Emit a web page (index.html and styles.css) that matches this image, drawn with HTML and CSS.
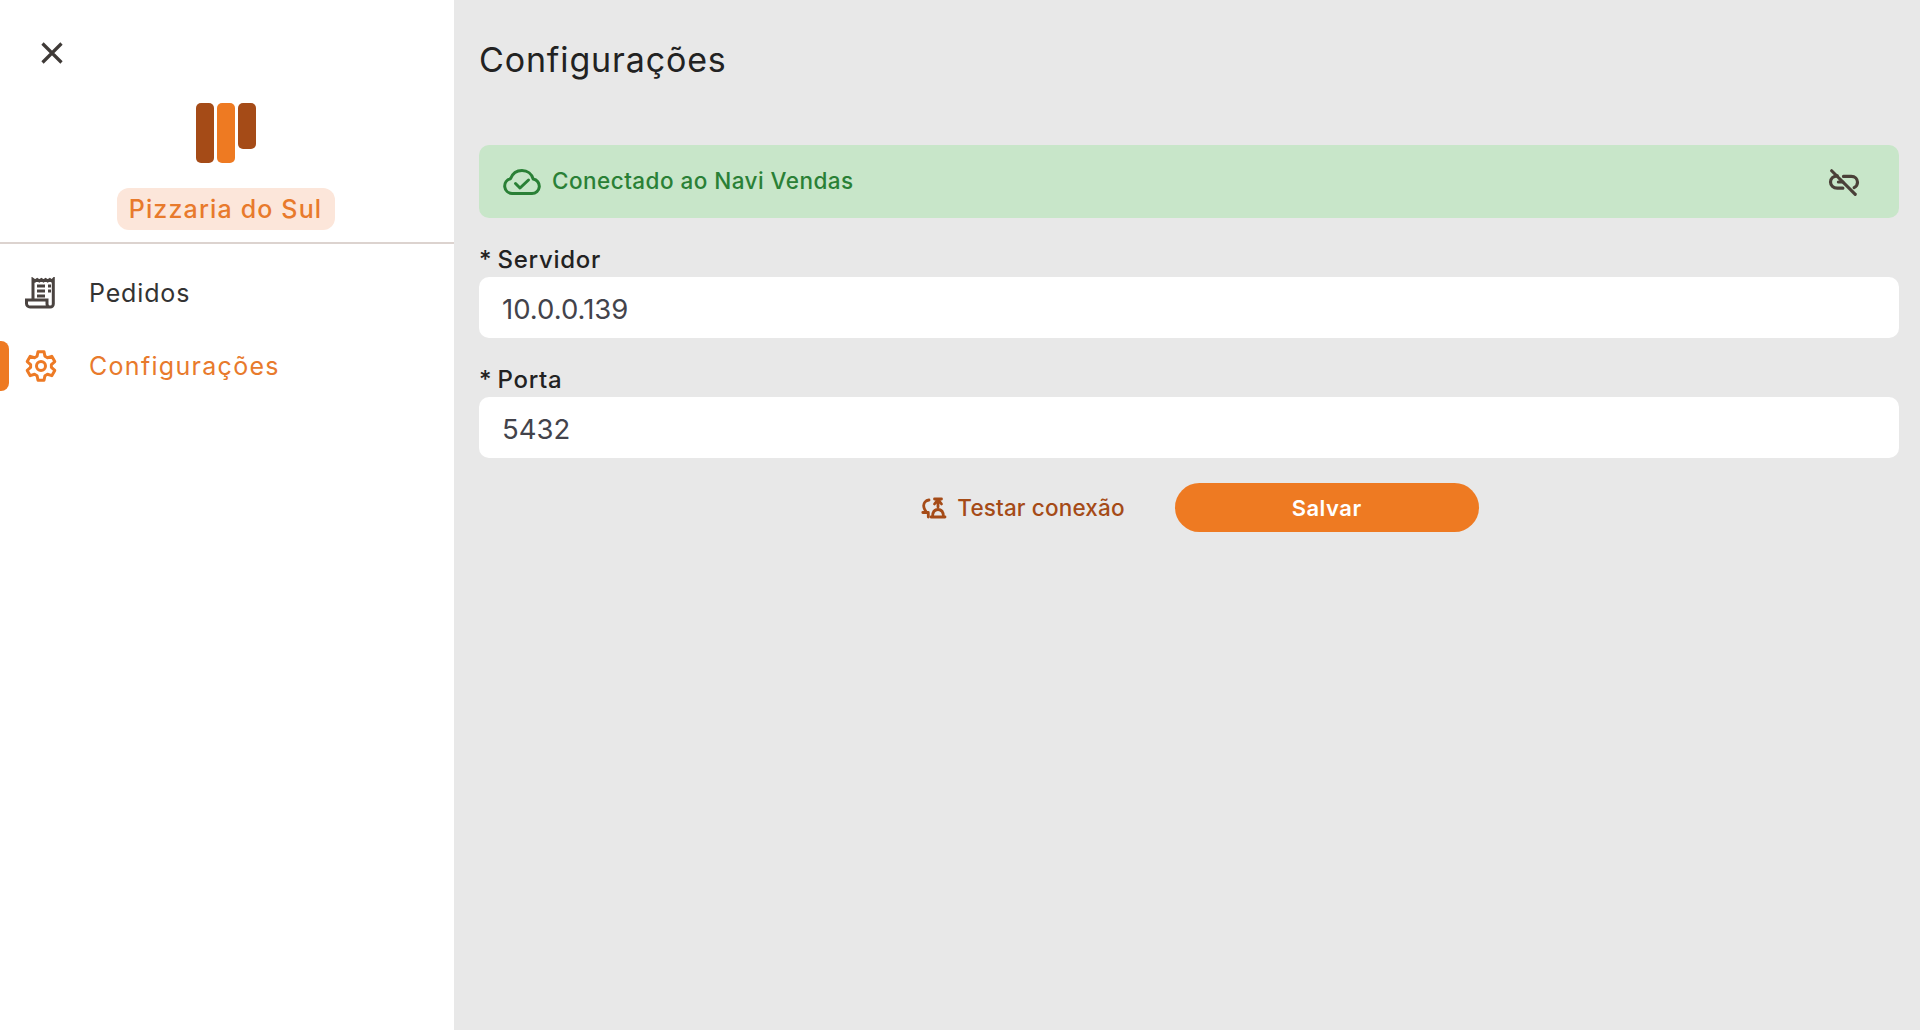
FILE: index.html
```html
<!DOCTYPE html>
<html lang="pt-BR">
<head>
  <meta charset="UTF-8" />
  <meta name="viewport" content="width=device-width, initial-scale=1.0"/>
  <title>Configurações</title>
  <link rel="stylesheet" href="styles.css">
</head>
<body>
  <aside class="sidebar">
    <div class="sidebar-top">
      <button class="close-btn" title="Fechar">
        <svg width="24" height="24" viewBox="0 0 24 24" fill="none" stroke="#3f3a37" stroke-width="3.200">
          <path d="M2.500 2.500 21.500 21.500M21.500 2.500 2.500 21.500"/>
        </svg>
      </button>
      <svg class="logo" width="60" height="60" viewBox="0 0 60 60">
        <rect x="0" y="0" width="18" height="60" rx="5" fill="#a54b17"/>
        <rect x="21" y="0" width="18" height="60" rx="5" fill="#ee7a22"/>
        <rect x="42" y="0" width="18" height="46" rx="5" fill="#a54b17"/>
      </svg>
      <span class="loja">Pizzaria do Sul</span>
    </div>

    <nav class="menu">
      <a class="menu-item">
        <svg width="32" height="32" viewBox="0 0 32 32" fill="none" stroke="#4a4340" stroke-width="3">
          <path d="M8 22V2.500l2.100 1.500 2.100-1.500 2.100 1.500 2.100-1.500 2.100 1.500 2.100-1.500 2.100 1.500 2.100-1.500 2.100 1.500 1.400-1.500V27a3 3 0 0 1-3 3H5a3.500 3.500 0 0 1-3.500-3.500V23H22v4a3 3 0 0 0 3 3"/>
          <path d="M12 9h8M12 14h8M12 19h8M23 9h3M23 14h3"/>
        </svg>
        <span>Pedidos</span>
      </a>
      <a class="menu-item ativo">
        <svg width="32" height="32" viewBox="0 0 32 32" fill="none" stroke="#ed7a25" stroke-width="3" stroke-linejoin="round">
          <path d="M12.070 6.260 12.990 1.820H19.010L19.930 6.260 22.460 7.730 26.780 6.300 29.790 11.520 26.400 14.540V17.460L29.790 20.480 26.780 25.700 22.460 24.270 19.930 25.740 19.010 30.180H12.990L12.070 25.740 9.540 24.270 5.220 25.700 2.210 20.480 5.600 17.460V14.540L2.210 11.520 5.220 6.300 9.540 7.730z"/>
          <circle cx="16" cy="16" r="4.500"/>
        </svg>
        <span>Configurações</span>
      </a>
    </nav>
  </aside>

  <main class="conteudo">
    <h1>Configurações</h1>

    <div class="status">
      <div class="status-info">
        <svg width="38" height="26" viewBox="0 0 38 26" fill="none" stroke="#2a8036" stroke-width="3" stroke-linecap="round" stroke-linejoin="round">
          <path d="M9 24.500a7.500 7.500 0 0 1-1.500-14.800C9.500 4.500 14 1.500 19 1.500c5.500 0 9.800 3.500 11.200 8.500A7.300 7.300 0 0 1 29 24.500z"/>
          <path d="M12.500 14.500l4.500 4.500 8.500-8"/>
        </svg>
        <span>Conectado ao Navi Vendas</span>
      </div>
      <button class="desconectar" title="Desconectar">
        <svg width="36" height="36" viewBox="0 0 32 32" fill="none" stroke="#4a4038" stroke-width="2.800" stroke-linecap="round">
          <path d="M5 6 26 27"/>
          <path d="M10 10.500c-3.500.2-6 2.500-6 5.500s2.500 5.500 6 5.500h5"/>
          <path d="M15.500 11h7c3.300 0 5.500 2.300 5.500 5.300 0 2.200-1.200 3.900-3 4.700"/>
          <path d="M11 16h4"/>
        </svg>
      </button>
    </div>

    <div class="campo">
      <label>* Servidor</label>
      <div class="input">10.0.0.139</div>
    </div>

    <div class="campo">
      <label>* Porta</label>
      <div class="input">5432</div>
    </div>

    <div class="acoes">
      <button class="btn-testar">
        <svg width="26" height="22" viewBox="0 0 26 22" fill="none" stroke="#a54b17" stroke-width="2.800" stroke-linecap="round" stroke-linejoin="round">
          <path d="M8 3C4.500 3.500 2.500 6 2.700 9c.1 2 1 3.800 2.300 5.500"/>
          <path d="M1.800 15.500h5.500v4.500"/>
          <path d="M13.500 2h7M13.500 7l3.500-4.500 3.500 4.500M17 3v7"/>
          <path d="M11.500 20c0-4.500 2-7.500 5.500-7.500s5.500 3 5.500 7.500zM10 20h14"/>
        </svg>
        <span>Testar conexão</span>
      </button>
      <button class="btn-salvar">Salvar</button>
    </div>
  </main>
</body>
</html>
```

FILE: styles.css
```css
:root {
  --laranja: #ee7a22;
  --marrom: #a54b17;
  --fundo: #e8e8e8;
  --texto: #262626;
}

* {
  margin: 0;
  padding: 0;
  box-sizing: border-box;
}

body {
  display: flex;
  height: 100vh;
  overflow: hidden;
  font-family: 'Inter', 'Open Sans', sans-serif;
  color: var(--texto);
  background-color: var(--fundo);
}

button {
  background: none;
  border: none;
  font-family: inherit;
  cursor: pointer;
}

.sidebar {
  width: 454px;
  flex-shrink: 0;
  background-color: #fff;
}

.sidebar-top {
  height: 244px;
  display: flex;
  flex-direction: column;
  align-items: center;
  position: relative;
  padding: 103px 3px 0 0;
  border-bottom: 2px solid #dcd3cf;
}

.close-btn {
  position: absolute;
  top: 41px;
  left: 40px;
  width: 24px;
  height: 24px;
}

.logo {
  display: block;
}

.loja {
  margin-top: 25px;
  height: 42px;
  width: 218px;
  display: flex;
  align-items: center;
  justify-content: center;
  font-size: 25px;
  font-weight: 500;
  letter-spacing: 1.150px;
  color: #e87a2c;
  background-color: #fce6da;
  border-radius: 12px;
}

.menu {
  padding-top: 24px;
}

.menu-item {
  height: 50px;
  margin-bottom: 23px;
  display: flex;
  align-items: center;
  gap: 32px;
  padding-left: 25px;
  font-size: 25px;
  letter-spacing: 0.850px;
  color: #333;
  position: relative;
}

.menu-item.ativo {
  color: #e87a2c;
  letter-spacing: 1.300px;
}

.menu-item.ativo::before {
  content: '';
  position: absolute;
  left: 0;
  top: 0;
  width: 9px;
  height: 100%;
  background-color: var(--laranja);
  border-radius: 0 8px 8px 0;
}

.conteudo {
  flex: 1;
  padding: 38px 21px 0 25px;
}

h1 {
  font-size: 34px;
  font-weight: 400;
  line-height: 44px;
  letter-spacing: 0.850px;
  color: #222;
  margin-bottom: 63px;
}

.status {
  height: 73px;
  display: flex;
  align-items: center;
  justify-content: space-between;
  padding: 0 37px 0 24px;
  background-color: #c8e6c9;
  border-radius: 10px;
  margin-bottom: 27px;
}

.status-info {
  display: flex;
  align-items: center;
  gap: 11px;
  font-size: 22.500px;
  font-weight: 500;
  letter-spacing: 0.460px;
  color: #2a8036;
}

.status-info span {
  padding-bottom: 2px;
}

.desconectar {
  display: flex;
}

.campo {
  margin-bottom: 27px;
}

.campo label {
  display: block;
  font-size: 24px;
  font-weight: 500;
  line-height: 30px;
  letter-spacing: 0.750px;
  word-spacing: -2px;
  color: #222;
  margin-bottom: 2px;
}

.input {
  height: 61px;
  display: flex;
  align-items: center;
  padding: 2px 23px 0;
  background-color: #fff;
  border-radius: 10px;
  font-size: 27.500px;
  color: #43434b;
}

.acoes {
  display: flex;
  align-items: center;
  justify-content: center;
  gap: 50px;
  padding-left: 22px;
  margin-top: -2px;
}

.btn-testar {
  display: flex;
  align-items: center;
  gap: 10px;
  font-size: 22.500px;
  font-weight: 500;
  letter-spacing: 0.150px;
  color: var(--marrom);
}

.btn-salvar {
  width: 304px;
  height: 49px;
  font-size: 22px;
  font-weight: 600;
  letter-spacing: 0.500px;
  color: #fff;
  background-color: var(--laranja);
  border-radius: 25px;
}
```
